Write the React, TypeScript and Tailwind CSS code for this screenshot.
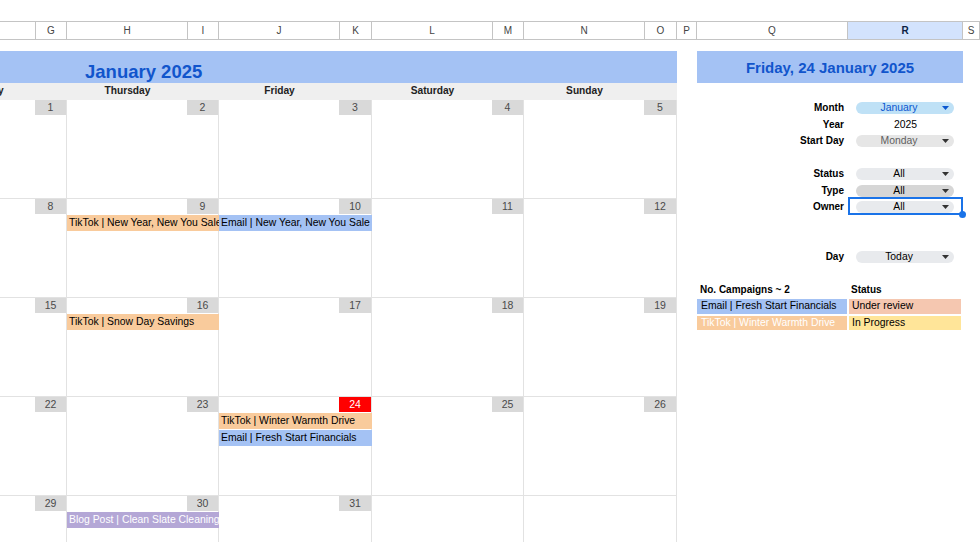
type Ev = { label: string; cls: string };
type Day = { d?: number; today?: boolean; ev?: Ev[] };

const tiktok = 'bg-[#f9cb9c] text-black';
const email = 'bg-[#a4c2f4] text-black';
const blog = 'bg-[#b4a7d6] text-white';

// spreadsheet column strip (F is partly scrolled off to the left)
const columns = [
  { l: 'F', w: 'w-[121px]' },
  { l: 'G', w: 'w-[31px]' },
  { l: 'H', w: 'w-[121px]' },
  { l: 'I', w: 'w-[31px]' },
  { l: 'J', w: 'w-[121px]' },
  { l: 'K', w: 'w-[32px]' },
  { l: 'L', w: 'w-[121px]' },
  { l: 'M', w: 'w-[31px]' },
  { l: 'N', w: 'w-[121px]' },
  { l: 'O', w: 'w-[32px]' },
  { l: 'P', w: 'w-[20px]' },
  { l: 'Q', w: 'w-[151px]' },
  { l: 'R', w: 'w-[115px]', active: true },
  { l: 'S', w: 'flex-1' },
];

const dayNames = ['Wednesday', 'Thursday', 'Friday', 'Saturday', 'Sunday'];
const dayW = ['w-[152px]', 'w-[152px]', 'w-[153px]', 'w-[152px]', 'w-[153px]'];
const narrowW = ['w-[31px]', 'w-[31px]', 'w-[32px]', 'w-[31px]', 'w-[32px]'];

const weeks: Day[][] = [
  [{ d: 1 }, { d: 2 }, { d: 3 }, { d: 4 }, { d: 5 }],
  [
    { d: 8 },
    { d: 9, ev: [{ label: 'TikTok | New Year, New You Sale', cls: tiktok }] },
    { d: 10, ev: [{ label: 'Email | New Year, New You Sale', cls: email }] },
    { d: 11 },
    { d: 12 },
  ],
  [
    { d: 15 },
    { d: 16, ev: [{ label: 'TikTok | Snow Day Savings', cls: tiktok }] },
    { d: 17 },
    { d: 18 },
    { d: 19 },
  ],
  [
    { d: 22 },
    { d: 23 },
    {
      d: 24,
      today: true,
      ev: [
        { label: 'TikTok | Winter Warmth Drive', cls: tiktok },
        { label: 'Email | Fresh Start Financials', cls: email },
      ],
    },
    { d: 25 },
    { d: 26 },
  ],
  [
    { d: 29 },
    { d: 30, ev: [{ label: 'Blog Post | Clean Slate Cleaning', cls: blog }] },
    { d: 31 },
    {},
    {},
  ],
];

function Caret({ cls }: { cls: string }) {
  return (
    <svg width="7" height="4" viewBox="0 0 7 4" className={`mr-[5px] ${cls}`}>
      <polygon points="0,0 7,0 3.5,4" fill="currentColor" />
    </svg>
  );
}

function Chip({ value, bg, text, caret }: { value: string; bg: string; text: string; caret: string }) {
  return (
    <div className={`mx-[8px] mr-[9px] h-[12px] rounded-full flex items-center ${bg}`}>
      <span className={`flex-1 text-center text-[10.4px] leading-none ${text}`}>{value}</span>
      <Caret cls={caret} />
    </div>
  );
}

function Row({ label, children, selected }: { label?: string; children?: React.ReactNode; selected?: boolean }) {
  return (
    <div className="flex h-[16.5px] items-center">
      <div className="w-[151px] pr-[4px] text-right text-[10px] font-bold leading-none">{label}</div>
      <div className="w-[115px] relative h-full flex flex-col justify-center">
        {children}
        {selected && (
          <div className="absolute left-0 right-0 top-[-2px] bottom-[1px] border-2 border-[#1a73e8]">
            <div className="absolute right-[-5px] bottom-[-5px] w-[7px] h-[7px] rounded-full bg-[#1a73e8]" />
          </div>
        )}
      </div>
    </div>
  );
}

function Calendar() {
  return (
    <div className="w-[762px]">
      <div className="h-[11px]" />
      <div className="h-[32px] bg-[#a4c2f4] flex items-end pl-[170px] pb-[2px]">
        <span className="text-[18.5px] leading-none font-bold text-[#1155cc]">January 2025</span>
      </div>
      <div className="h-[17px] bg-[#efefef] flex">
        {dayNames.map((n, i) => (
          <div key={n} className={`${dayW[i]} flex`}>
            <div className="w-[121px] flex items-center justify-center text-[10.2px] font-bold leading-none text-[#222]">
              {n}
            </div>
          </div>
        ))}
      </div>
      {weeks.map((week, wi) => (
        <div key={wi} className="flex h-[99px] border-b border-[#e2e2e2]">
          {week.map((day, i) => (
            <div key={i} className={`${dayW[i]} border-r border-[#e2e2e2] flex flex-col`}>
              <div className="h-[16px] flex justify-end">
                {day.d && (
                  <div
                    className={`${narrowW[i]} h-[15px] flex items-center justify-center text-[10.5px] leading-none ${
                      day.today ? 'bg-[#ff0000] text-white' : 'bg-[#d9d9d9] text-[#4a4a4a]'
                    }`}
                  >
                    {day.d}
                  </div>
                )}
              </div>
              <div className="flex flex-col gap-px">
                {day.ev?.map((e) => (
                  <div
                    key={e.label}
                    className={`h-[16px] -mr-px pl-[2px] flex items-center overflow-hidden whitespace-nowrap text-[10.4px] leading-none ${e.cls}`}
                  >
                    {e.label}
                  </div>
                ))}
              </div>
            </div>
          ))}
        </div>
      ))}
    </div>
  );
}

function SidePanel() {
  return (
    <div className="w-[266px]">
      <div className="h-[11px]" />
      <div className="h-[32px] bg-[#a4c2f4] flex items-center justify-center text-[15px] font-bold text-[#1155cc] leading-none">
        Friday, 24 January 2025
      </div>
      <div className="h-[17px]" />
      <Row label="Month">
        <Chip value="January" bg="bg-[#bfe1f6]" text="text-[#0b57d0]" caret="text-[#0b57d0]" />
      </Row>
      <Row label="Year">
        <div className="text-center text-[10.4px] leading-none">2025</div>
      </Row>
      <Row label="Start Day">
        <Chip value="Monday" bg="bg-[#e6e6e6]" text="text-[#5f5f5f]" caret="text-[#333]" />
      </Row>
      <Row />
      <Row label="Status">
        <Chip value="All" bg="bg-[#e8eaed]" text="text-black" caret="text-[#333]" />
      </Row>
      <Row label="Type">
        <Chip value="All" bg="bg-[#d6d6d6]" text="text-black" caret="text-[#333]" />
      </Row>
      <Row label="Owner" selected>
        <Chip value="All" bg="bg-[#e8eaed]" text="text-black" caret="text-[#333]" />
      </Row>
      <Row />
      <Row />
      <Row label="Day">
        <Chip value="Today" bg="bg-[#e8eaed]" text="text-black" caret="text-[#333]" />
      </Row>
      <Row />
      <div className="flex h-[16.5px] items-center text-[10px] font-bold leading-none">
        <div className="w-[151px] pl-[3px]">No. Campaigns ~ 2</div>
        <div className="w-[115px] pl-[3px]">Status</div>
      </div>
      <div className="flex h-[16.5px] text-[10.4px] leading-none">
        <div className="w-[151px] py-px pr-px">
          <div className="h-full bg-[#a4c2f4] flex items-center pl-[4px] whitespace-nowrap">Email | Fresh Start Financials</div>
        </div>
        <div className="w-[115px] py-px pl-px pr-[2px]">
          <div className="h-full bg-[#f5c7b0] flex items-center pl-[3px]">Under review</div>
        </div>
      </div>
      <div className="flex h-[16.5px] text-[10.4px] leading-none">
        <div className="w-[151px] py-px pr-px">
          <div className="h-full bg-[#f9cb9c] text-white flex items-center pl-[4px] whitespace-nowrap">TikTok | Winter Warmth Drive</div>
        </div>
        <div className="w-[115px] py-px pl-px pr-[2px]">
          <div className="h-full bg-[#ffe599] flex items-center pl-[3px]">In Progress</div>
        </div>
      </div>
    </div>
  );
}

export default function App() {
  return (
    <div className="w-[980px] h-[542px] overflow-hidden bg-white text-black font-['Liberation_Sans',Arial,sans-serif]">
      <div className="ml-[-85px] w-[1065px]">
        <div className="mt-[21px] h-[19px] flex border-y border-[#c4c4c4]">
          {columns.map((c) => (
            <div
              key={c.l}
              className={`${c.w} border-r border-[#c4c4c4] flex items-center justify-center text-[10px] leading-none ${
                c.active ? 'bg-[#d3e3fd] font-bold text-[#0b1f44]' : 'text-[#444]'
              }`}
            >
              {c.l}
            </div>
          ))}
        </div>
        <div className="flex">
          <Calendar />
          <div className="w-[20px]" />
          <SidePanel />
        </div>
      </div>
    </div>
  );
}
